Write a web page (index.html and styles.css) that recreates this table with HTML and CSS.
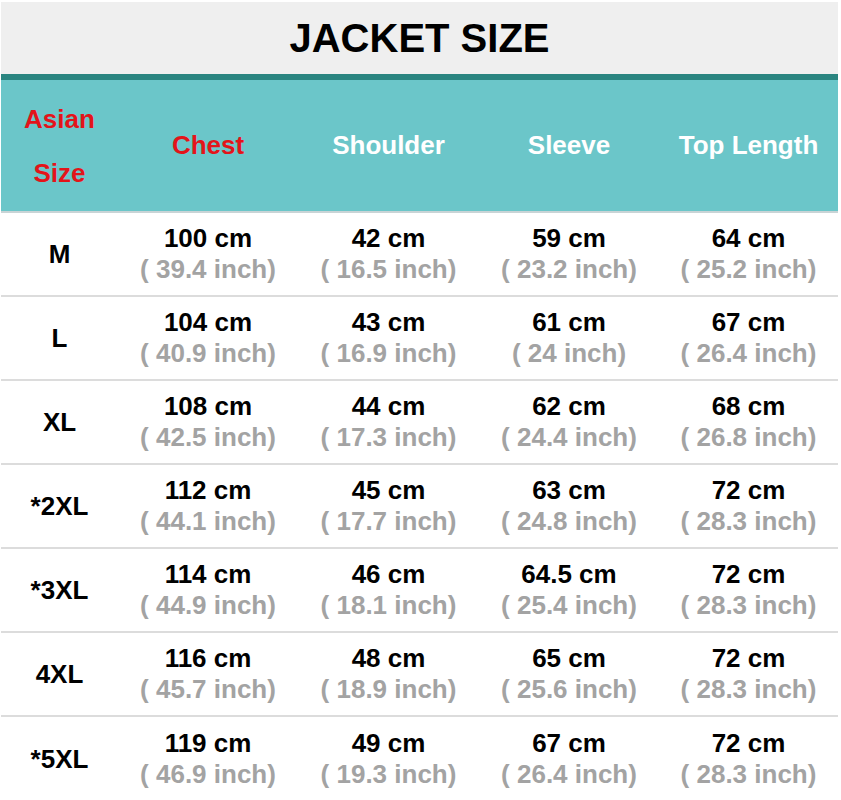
FILE: index.html
```html
<!DOCTYPE html>
<html>
<head>
<meta charset="utf-8">
<link rel="stylesheet" href="styles.css">
</head>
<body>
<div class="chart">
  <div class="title">JACKET SIZE</div>
  <div class="head">
    <div class="hcell red asian">Asian<br>Size</div>
    <div class="hcell red">Chest</div>
    <div class="hcell">Shoulder</div>
    <div class="hcell">Sleeve</div>
    <div class="hcell">Top Length</div>
  </div>
  <div class="row">
    <div class="size">M</div>
    <div class="cell"><b>100 cm</b><span>( 39.4 inch)</span></div>
    <div class="cell"><b>42 cm</b><span>( 16.5 inch)</span></div>
    <div class="cell"><b>59 cm</b><span>( 23.2 inch)</span></div>
    <div class="cell"><b>64 cm</b><span>( 25.2 inch)</span></div>
  </div>
  <div class="row">
    <div class="size">L</div>
    <div class="cell"><b>104 cm</b><span>( 40.9 inch)</span></div>
    <div class="cell"><b>43 cm</b><span>( 16.9 inch)</span></div>
    <div class="cell"><b>61 cm</b><span>( 24 inch)</span></div>
    <div class="cell"><b>67 cm</b><span>( 26.4 inch)</span></div>
  </div>
  <div class="row">
    <div class="size">XL</div>
    <div class="cell"><b>108 cm</b><span>( 42.5 inch)</span></div>
    <div class="cell"><b>44 cm</b><span>( 17.3 inch)</span></div>
    <div class="cell"><b>62 cm</b><span>( 24.4 inch)</span></div>
    <div class="cell"><b>68 cm</b><span>( 26.8 inch)</span></div>
  </div>
  <div class="row">
    <div class="size">*2XL</div>
    <div class="cell"><b>112 cm</b><span>( 44.1 inch)</span></div>
    <div class="cell"><b>45 cm</b><span>( 17.7 inch)</span></div>
    <div class="cell"><b>63 cm</b><span>( 24.8 inch)</span></div>
    <div class="cell"><b>72 cm</b><span>( 28.3 inch)</span></div>
  </div>
  <div class="row">
    <div class="size">*3XL</div>
    <div class="cell"><b>114 cm</b><span>( 44.9 inch)</span></div>
    <div class="cell"><b>46 cm</b><span>( 18.1 inch)</span></div>
    <div class="cell"><b>64.5 cm</b><span>( 25.4 inch)</span></div>
    <div class="cell"><b>72 cm</b><span>( 28.3 inch)</span></div>
  </div>
  <div class="row">
    <div class="size">4XL</div>
    <div class="cell"><b>116 cm</b><span>( 45.7 inch)</span></div>
    <div class="cell"><b>48 cm</b><span>( 18.9 inch)</span></div>
    <div class="cell"><b>65 cm</b><span>( 25.6 inch)</span></div>
    <div class="cell"><b>72 cm</b><span>( 28.3 inch)</span></div>
  </div>
  <div class="row last">
    <div class="size">*5XL</div>
    <div class="cell"><b>119 cm</b><span>( 46.9 inch)</span></div>
    <div class="cell"><b>49 cm</b><span>( 19.3 inch)</span></div>
    <div class="cell"><b>67 cm</b><span>( 26.4 inch)</span></div>
    <div class="cell"><b>72 cm</b><span>( 28.3 inch)</span></div>
  </div>
</div>
</body>
</html>
```

FILE: styles.css
```css
html, body {
  margin: 0;
  padding: 0;
  background: #ffffff;
}
body {
  font-family: "Liberation Sans", Arial, sans-serif;
  font-weight: bold;
  overflow: hidden;
}
.chart {
  width: 837px;
  margin-left: 1px;
  padding-top: 2px;
}
.title {
  height: 72px;
  background: #efefef;
  display: flex;
  align-items: center;
  justify-content: center;
  font-size: 40px;
  color: #000;
  box-sizing: border-box;
}
.head {
  display: grid;
  grid-template-columns: 117px 180px 181px 180px 179px;
  height: 139px;
  background: #6bc6c9;
  border-top: 6px solid #2a8580;
  border-bottom: 2px solid #c9d4d6;
  box-sizing: border-box;
}
.hcell {
  display: flex;
  align-items: center;
  justify-content: center;
  font-size: 26px;
  color: #ffffff;
  text-align: center;
}
.hcell.red {
  color: #e3141a;
}
.hcell.asian {
  line-height: 54px;
}
.row {
  display: grid;
  grid-template-columns: 117px 180px 181px 180px 179px;
  height: 84px;
  border-bottom: 2px solid #dcdcdc;
  box-sizing: border-box;
}
.row.last {
  border-bottom: none;
}
.size {
  display: flex;
  align-items: center;
  justify-content: center;
  font-size: 26px;
  color: #000;
  padding-top: 1px;
}
.cell {
  display: flex;
  flex-direction: column;
  align-items: center;
  justify-content: center;
  font-size: 26px;
  line-height: 31px;
  color: #000;
}
.cell b {
  font-weight: bold;
}
.cell span {
  color: #a3a3a3;
}
```
